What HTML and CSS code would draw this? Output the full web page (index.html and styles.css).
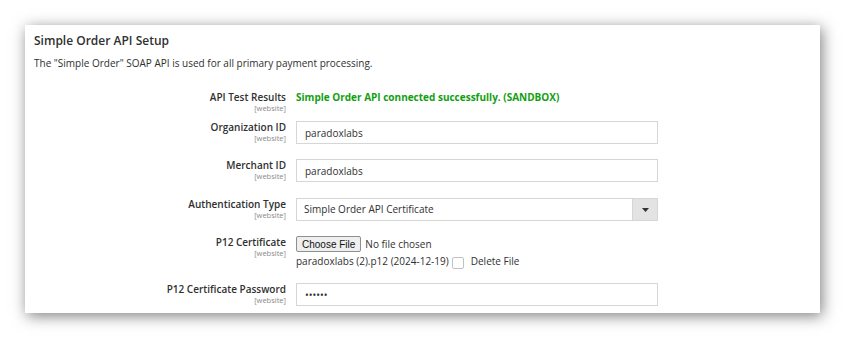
FILE: index.html
```html
<!DOCTYPE html>
<html lang="en">

<head>
    <meta charset="UTF-8">
    <meta name="viewport" content="width=device-width, initial-scale=1.0">
    <title>Simple Order API Setup</title>
    <link rel="stylesheet" href="styles.css">
</head>

<body>
    <!-- Config section -->
    <div class="section">
        <h2 class="section-title">Simple Order API Setup</h2>
        <p class="section-note">The "Simple Order" SOAP API is used for all primary payment processing.</p>

        <div class="form">
            <div class="row row-test">
                <div class="label">
                    <span>API Test Results</span>
                    <span class="scope">[website]</span>
                </div>
                <div class="value">
                    <span class="success">Simple Order API connected successfully. (SANDBOX)</span>
                </div>
            </div>

            <div class="row">
                <div class="label">
                    <span>Organization ID</span>
                    <span class="scope">[website]</span>
                </div>
                <div class="value">
                    <input class="text-input" type="text" value="paradoxlabs">
                </div>
            </div>

            <div class="row row-merchant">
                <div class="label">
                    <span>Merchant ID</span>
                    <span class="scope">[website]</span>
                </div>
                <div class="value">
                    <input class="text-input" type="text" value="paradoxlabs">
                </div>
            </div>

            <div class="row row-auth">
                <div class="label">
                    <span>Authentication Type</span>
                    <span class="scope">[website]</span>
                </div>
                <div class="value">
                    <div class="select">
                        <span class="select-text">Simple Order API Certificate</span>
                        <span class="select-arrow">
                            <svg width="7" height="4" viewBox="0 0 7 4"><path d="M0 0h7L3.5 4z" fill="#333"/></svg>
                        </span>
                    </div>
                </div>
            </div>

            <div class="row row-file">
                <div class="label">
                    <span>P12 Certificate</span>
                    <span class="scope">[website]</span>
                </div>
                <div class="value">
                    <div class="file-line">
                        <button class="file-btn">Choose File</button>
                        <span>No file chosen</span>
                    </div>
                    <div class="file-line file-current">
                        <span>paradoxlabs (2).p12 (2024-12-19)</span>
                        <span class="checkbox"></span>
                        <span>Delete File</span>
                    </div>
                </div>
            </div>

            <div class="row">
                <div class="label">
                    <span>P12 Certificate Password</span>
                    <span class="scope">[website]</span>
                </div>
                <div class="value">
                    <input class="text-input" type="text" value="••••••">
                </div>
            </div>
        </div>
    </div>
</body>

</html>
```

FILE: styles.css
```css
body {
    font-family: "Open Sans", Arial, sans-serif;
    background: #fff;
    color: #303030;
    margin: 0;
    padding: 25px;
    padding-right: 0;
}

/* Section card */
.section {
    width: 795px;
    height: 288px;
    box-sizing: border-box;
    background: #fff;
    padding: 7px 9px;
    box-shadow: 2px 3px 14px rgba(0, 0, 0, 0.5);
}

.section-title {
    margin: 0;
    font-size: 12px;
    font-weight: 600;
    line-height: 18px;
    color: #303030;
}

.section-note {
    margin: 6px 0 0;
    font-size: 10px;
    line-height: 14px;
    color: #303030;
}

/* Form rows */
.form {
    display: flex;
    flex-direction: column;
    margin-top: 21px;
}

.row {
    display: grid;
    grid-template-columns: 252px 362px;
    column-gap: 10px;
    margin-bottom: 15px;
}

.row-test {
    margin-bottom: 8px;
}

.row-merchant {
    margin-bottom: 16px;
}

.row-auth {
    margin-bottom: 15px;
}

.row-file {
    margin-bottom: 14px;
}

.label {
    display: flex;
    flex-direction: column;
    align-items: flex-end;
    font-size: 10px;
    font-weight: 600;
    line-height: 13px;
    color: #303030;
}

.scope {
    font-size: 7.5px;
    font-weight: 400;
    line-height: 9px;
    color: #8a8a8a;
}

.value {
    font-size: 10px;
}

.success {
    display: block;
    font-size: 10px;
    line-height: 13px;
    font-weight: 700;
    color: #11a011;
}

.text-input {
    display: block;
    width: 100%;
    height: 23px;
    box-sizing: border-box;
    border: 1px solid #d6d6d6;
    padding: 0 8px;
    font-family: "Open Sans", Arial, sans-serif;
    font-size: 10px;
    color: #303030;
    outline: none;
}

.select {
    display: flex;
    height: 23px;
    box-sizing: border-box;
    border: 1px solid #d6d6d6;
}

.select-text {
    flex: 1;
    padding: 0 7px;
    line-height: 21px;
    color: #303030;
}

.select-arrow {
    width: 24px;
    background: #e3e3e3;
    border-left: 1px solid #d6d6d6;
    display: flex;
    align-items: center;
    justify-content: center;
}

.file-line {
    display: flex;
    align-items: center;
    gap: 4px;
    line-height: 15px;
    color: #303030;
}

.file-current {
    gap: 3px;
    margin-top: 2px;
}

.file-btn {
    font-family: "Liberation Sans", Arial, sans-serif;
    font-size: 10px;
    height: 16px;
    padding: 0 5px;
    background: #efefef;
    border: 1px solid #8f8f8f;
    border-radius: 2px;
    color: #111;
    margin: 0;
}

.checkbox {
    width: 10px;
    height: 10px;
    border: 1px solid #c2c2c2;
    border-radius: 2px;
    margin: 0 4px 0 0;
    position: relative;
    top: 1px;
}
```
